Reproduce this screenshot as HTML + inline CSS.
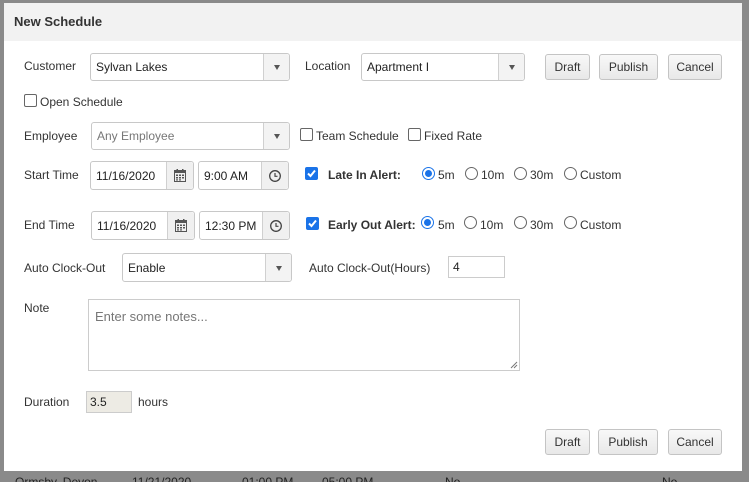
<!DOCTYPE html>
<html><head><style>
*{box-sizing:border-box;margin:0;padding:0}
body{width:749px;height:482px;overflow:hidden;background:#8a8a8a;font-family:"Liberation Sans",sans-serif;font-size:12px;color:#333;position:relative}
.a{position:absolute}
.dlg{left:4px;top:3px;width:738px;height:468px;background:#fff}
.hd{left:4px;top:3px;width:738px;height:38px;background:#f2f2f2}
.lbl{position:absolute;line-height:14px;color:#333}
.box{position:absolute;border:1px solid #c8c8c8;border-radius:3px;background:#fff}
.sel .arr{position:absolute;right:0;top:0;bottom:0;width:26px;border-left:1px solid #d0d0d0;background:#f3f3f3;border-radius:0 3px 3px 0}
.sel .arr:after{content:"";position:absolute;left:10px;top:50%;margin-top:-2px;border-left:3px solid transparent;border-right:3px solid transparent;border-top:5px solid #555}
.txt{position:absolute;left:5px;top:50%;margin-top:-7px;line-height:14px}
.btn{position:absolute;border:1px solid #c4c4c4;border-radius:3px;background:linear-gradient(#f8f8f8,#e8e8e8);text-align:center;line-height:24px;color:#333}
.cb{position:absolute;width:13px;height:13px;border:1px solid #666;border-radius:2px;background:#fff}
.cbk{position:absolute;width:13px;height:13px;border-radius:2px;background:#1a73e8}
.rd{position:absolute;width:13px;height:13px;border:1px solid #666;border-radius:50%;background:#fff}
.rds{position:absolute;width:13px;height:13px;border:1px solid #1a73e8;border-radius:50%;background:#fff}
.rds:after{content:"";position:absolute;left:2px;top:2px;width:7px;height:7px;border-radius:50%;background:#1a73e8}
.ib{position:absolute;right:0;top:0;bottom:0;width:27px;border-left:1px solid #d0d0d0;background:#f0f0f0;border-radius:0 3px 3px 0}
</style></head><body>
<div class="a" style="left:0;top:471px;width:749px;height:11px;background:#8a8a8a;color:#222;font-size:12px;line-height:22px;overflow:hidden"><span class="a" style="left:15px;top:0">Ormsby, Devon</span><span class="a" style="left:132px">11/21/2020</span><span class="a" style="left:242px">01:00 PM</span><span class="a" style="left:322px">05:00 PM</span><span class="a" style="left:445px">No</span><span class="a" style="left:662px">No</span></div>
<div class="a dlg"></div>
<div class="a hd"></div>
<div class="lbl" style="left:14px;top:15px;font-weight:bold;font-size:13px;color:#333">New Schedule</div>

<div class="lbl" style="left:24px;top:59px">Customer</div>
<div class="box sel" style="left:90px;top:53px;width:200px;height:28px"><span class="txt" style="color:#222">Sylvan Lakes</span><div class="arr"></div></div>
<div class="lbl" style="left:305px;top:59px">Location</div>
<div class="box sel" style="left:361px;top:53px;width:164px;height:28px"><span class="txt" style="color:#222">Apartment I</span><div class="arr"></div></div>
<div class="btn" style="left:545px;top:54px;width:45px;height:26px">Draft</div>
<div class="btn" style="left:599px;top:54px;width:59px;height:26px">Publish</div>
<div class="btn" style="left:668px;top:54px;width:54px;height:26px">Cancel</div>

<div class="cb" style="left:24px;top:94px"></div>
<div class="lbl" style="left:40px;top:95px">Open Schedule</div>

<div class="lbl" style="left:24px;top:129px">Employee</div>
<div class="box sel" style="left:91px;top:122px;width:199px;height:28px"><span class="txt" style="color:#777">Any Employee</span><div class="arr"></div></div>
<div class="cb" style="left:300px;top:128px"></div>
<div class="lbl" style="left:316px;top:129px">Team Schedule</div>
<div class="cb" style="left:408px;top:128px"></div>
<div class="lbl" style="left:424px;top:129px">Fixed Rate</div>

<svg width="0" height="0" style="position:absolute"><defs>
<g id="cal"><rect x="0.5" y="1.5" width="11" height="11" fill="none" stroke="#555"/><rect x="0.5" y="1.5" width="11" height="2.5" fill="#555"/><rect x="2.5" y="0" width="1.5" height="3" fill="#555"/><rect x="8" y="0" width="1.5" height="3" fill="#555"/><g fill="#555"><rect x="2" y="5.5" width="2" height="1.5"/><rect x="5" y="5.5" width="2" height="1.5"/><rect x="8" y="5.5" width="2" height="1.5"/><rect x="2" y="8" width="2" height="1.5"/><rect x="5" y="8" width="2" height="1.5"/><rect x="8" y="8" width="2" height="1.5"/><rect x="2" y="10.3" width="2" height="1.2"/><rect x="5" y="10.3" width="2" height="1.2"/></g></g>
<g id="clk"><circle cx="6" cy="6" r="5.3" fill="none" stroke="#444" stroke-width="1.3"/><path d="M6 3V6.3H8.5" fill="none" stroke="#444" stroke-width="1.2"/></g>
</defs></svg>

<div class="lbl" style="left:24px;top:168px">Start Time</div>
<div class="box" style="left:90px;top:161px;width:104px;height:29px"><span class="txt" style="color:#222">11/16/2020</span><div class="ib"><svg class="a" style="left:7px;top:7px" width="12" height="13"><use href="#cal"/></svg></div></div>
<div class="box" style="left:198px;top:161px;width:91px;height:29px"><span class="txt" style="color:#222">9:00 AM</span><div class="ib"><svg class="a" style="left:7px;top:8px" width="12" height="12"><use href="#clk"/></svg></div></div>
<div class="cbk" style="left:305px;top:167px"><svg width="13" height="13"><path d="M3 6.5L5.5 9L10 3.5" fill="none" stroke="#fff" stroke-width="2"/></svg></div>
<div class="lbl" style="left:328px;top:168px;font-weight:bold">Late In Alert:</div>
<div class="rds" style="left:422px;top:167px"></div><div class="lbl" style="left:438px;top:168px">5m</div>
<div class="rd" style="left:465px;top:167px"></div><div class="lbl" style="left:481px;top:168px">10m</div>
<div class="rd" style="left:514px;top:167px"></div><div class="lbl" style="left:530px;top:168px">30m</div>
<div class="rd" style="left:564px;top:167px"></div><div class="lbl" style="left:580px;top:168px">Custom</div>

<div class="lbl" style="left:24px;top:218px">End Time</div>
<div class="box" style="left:91px;top:211px;width:104px;height:29px"><span class="txt" style="color:#222">11/16/2020</span><div class="ib"><svg class="a" style="left:7px;top:7px" width="12" height="13"><use href="#cal"/></svg></div></div>
<div class="box" style="left:199px;top:211px;width:91px;height:29px"><span class="txt" style="color:#222">12:30 PM</span><div class="ib"><svg class="a" style="left:7px;top:8px" width="12" height="12"><use href="#clk"/></svg></div></div>
<div class="cbk" style="left:306px;top:217px"><svg width="13" height="13"><path d="M3 6.5L5.5 9L10 3.5" fill="none" stroke="#fff" stroke-width="2"/></svg></div>
<div class="lbl" style="left:328px;top:218px;font-weight:bold">Early Out Alert:</div>
<div class="rds" style="left:421px;top:216px"></div><div class="lbl" style="left:438px;top:218px">5m</div>
<div class="rd" style="left:464px;top:216px"></div><div class="lbl" style="left:480px;top:218px">10m</div>
<div class="rd" style="left:514px;top:216px"></div><div class="lbl" style="left:530px;top:218px">30m</div>
<div class="rd" style="left:564px;top:216px"></div><div class="lbl" style="left:580px;top:218px">Custom</div>

<div class="lbl" style="left:24px;top:261px">Auto Clock-Out</div>
<div class="box sel" style="left:122px;top:253px;width:170px;height:29px"><span class="txt" style="color:#222">Enable</span><div class="arr"></div></div>
<div class="lbl" style="left:309px;top:261px">Auto Clock-Out(Hours)</div>
<div class="a" style="left:448px;top:256px;width:57px;height:22px;border:1px solid #ccc"><span class="txt" style="left:4px;color:#222">4</span></div>

<div class="lbl" style="left:24px;top:301px">Note</div>
<div class="a" style="left:88px;top:299px;width:432px;height:72px;border:1px solid #ccc"><span class="a" style="left:6px;top:9px;color:#777;font-size:13px">Enter some notes...</span>
<svg class="a" style="right:1px;bottom:1px" width="8" height="8"><path d="M7 1L1 7M7 4L4 7" stroke="#777"/></svg></div>

<div class="lbl" style="left:24px;top:395px">Duration</div>
<div class="a" style="left:86px;top:391px;width:46px;height:22px;border:1px solid #ccc;background:#edebe4"><span class="txt" style="left:3px;color:#222">3.5</span></div>
<div class="lbl" style="left:138px;top:395px">hours</div>

<div class="btn" style="left:545px;top:429px;width:45px;height:26px">Draft</div>
<div class="btn" style="left:598px;top:429px;width:60px;height:26px">Publish</div>
<div class="btn" style="left:668px;top:429px;width:54px;height:26px">Cancel</div>
</body></html>
